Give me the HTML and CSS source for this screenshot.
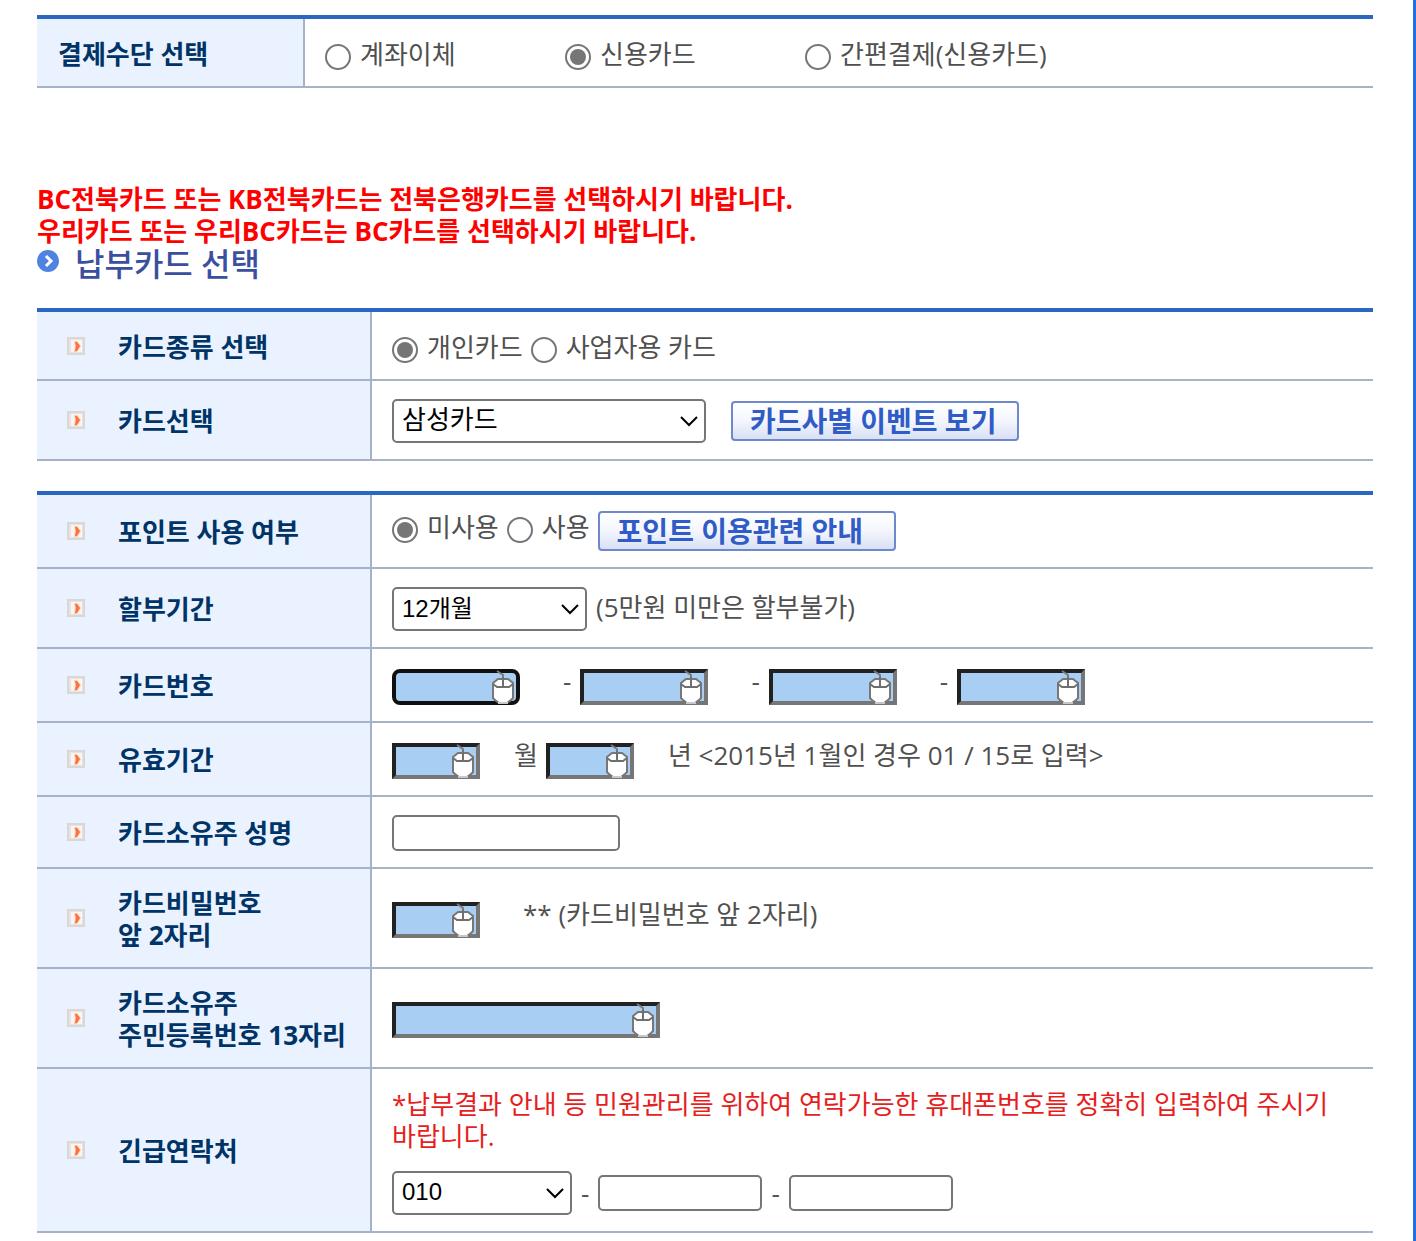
FILE: index.html
```html
<!DOCTYPE html>
<html lang="ko">
	<head>
		<meta charset="utf-8">
		<title>납부카드 선택</title>
		<meta name="viewport" content="width=device-width, initial-scale=1.0">
		<link rel="stylesheet" href="styles.css">
	</head>
	<body>
		<svg class="defs" width="0" height="0" aria-hidden="true">
			<symbol id="bullet" viewBox="0 0 18 18">
				<rect width="18" height="18" fill="#d9d8d6"/>
				<rect x="2" y="2" width="14" height="14" fill="#e6e4e2"/>
				<rect x="4" y="3" width="11" height="12" fill="#f8f5f2"/>
				<path d="M7 4h3l4 5-4 6H7l1-6z" fill="#ffc9ae"/>
				<path d="M8 5h2l3 4-3 5H8l1-5z" fill="#fb7240"/>
			</symbol>
			<symbol id="arrow" viewBox="0 0 20 12">
				<path d="M2 2l8 8 8-8" fill="none" stroke="#000" stroke-width="2"/>
			</symbol>
			<symbol id="mouse" viewBox="0 0 24 36">
				<path d="M6 2l6 4v5" fill="none" stroke="#7b7b7b" stroke-width="2"/>
				<path d="M2 14l5-4h10l5 4v15l-2 2-4 3H8l-4-3-2-2z" fill="#fff" stroke="#777" stroke-width="2"/>
				<path d="M7 34h10" stroke="#c8c8c8" stroke-width="2"/>
				<path d="M2 15l4 3h12l4-3M12 8v10" fill="none" stroke="#6f6f6f" stroke-width="2"/>
			</symbol>
		</svg>
		<form class="page">
			<table class="tbl tbl-method">
				<tr>
					<th scope="row">결제수단 선택</th>
					<td>
						<div class="line methods">
							<label class="opt"><input type="radio" name="method">계좌이체</label>
							<label class="opt"><input type="radio" name="method" checked>신용카드</label>
							<label class="opt"><input type="radio" name="method">간편결제(신용카드)</label>
						</div>
					</td>
				</tr>
			</table>

			<p class="notice">BC전북카드 또는 KB전북카드는 전북은행카드를 선택하시기 바랍니다.<br>우리카드 또는 우리BC카드는 BC카드를 선택하시기 바랍니다.</p>
			<h2 class="title">
				<svg width="22" height="22" viewBox="0 0 22 22" aria-hidden="true">
					<circle cx="11" cy="11" r="11" fill="#4f83e2"/>
					<path d="M9 6l5 5-5 5" fill="none" stroke="#fff" stroke-width="3"/>
				</svg>
				납부카드 선택
			</h2>

			<table class="tbl">
				<tr>
					<th scope="row"><div class="name"><svg class="bullet"><use href="#bullet"/></svg>카드종류 선택</div></th>
					<td>
						<div class="line">
							<label class="opt"><input type="radio" name="kind" checked>개인카드</label>
							<label class="opt"><input type="radio" name="kind">사업자용 카드</label>
						</div>
					</td>
				</tr>
				<tr class="h80">
					<th scope="row"><div class="name"><svg class="bullet"><use href="#bullet"/></svg><label for="card">카드선택</label></div></th>
					<td>
						<div class="line">
							<div class="select select-card">
								<select id="card"><option>삼성카드</option></select>
								<svg><use href="#arrow"/></svg>
							</div>
							<button type="button" class="btn btn-event">카드사별 이벤트 보기</button>
						</div>
					</td>
				</tr>
			</table>

			<table class="tbl">
				<tr class="h74">
					<th scope="row"><div class="name"><svg class="bullet"><use href="#bullet"/></svg>포인트 사용 여부</div></th>
					<td>
						<div class="line line-top">
							<label class="opt"><input type="radio" name="point" checked>미사용</label>
							<label class="opt"><input type="radio" name="point">사용</label>
							<button type="button" class="btn btn-point">포인트 이용관련 안내</button>
						</div>
					</td>
				</tr>
				<tr class="h80">
					<th scope="row"><div class="name"><svg class="bullet"><use href="#bullet"/></svg><label for="months">할부기간</label></div></th>
					<td>
						<div class="line line-base">
							<div class="select select-month">
								<select id="months"><option>12개월</option></select>
								<svg><use href="#arrow"/></svg>
							</div>
							<span class="after">(5만원 미만은 할부불가)</span>
						</div>
					</td>
				</tr>
				<tr class="h74">
					<th scope="row"><div class="name"><svg class="bullet"><use href="#bullet"/></svg><label for="no1">카드번호</label></div></th>
					<td>
						<div class="line line-top">
							<div class="secure focus"><input type="text" id="no1"><svg><use href="#mouse"/></svg></div>
							<span class="dash">-</span>
							<div class="secure"><input type="password" aria-label="카드번호 2"><svg><use href="#mouse"/></svg></div>
							<span class="dash">-</span>
							<div class="secure"><input type="password" aria-label="카드번호 3"><svg><use href="#mouse"/></svg></div>
							<span class="dash">-</span>
							<div class="secure"><input type="text" aria-label="카드번호 4"><svg><use href="#mouse"/></svg></div>
						</div>
					</td>
				</tr>
				<tr class="h74">
					<th scope="row"><div class="name"><svg class="bullet"><use href="#bullet"/></svg><label for="month">유효기간</label></div></th>
					<td>
						<div class="line line-top">
							<div class="secure short"><input type="text" id="month"><svg><use href="#mouse"/></svg></div>
							<label class="unit" for="month">월</label>
							<div class="secure short"><input type="text" id="year"><svg><use href="#mouse"/></svg></div>
							<label for="year">년 &lt;2015년 1월인 경우 01 / 15로 입력&gt;</label>
						</div>
					</td>
				</tr>
				<tr class="h72">
					<th scope="row"><div class="name"><svg class="bullet"><use href="#bullet"/></svg><label for="owner">카드소유주 성명</label></div></th>
					<td><div class="line"><input type="text" id="owner" class="text owner"></div></td>
				</tr>
				<tr class="h100">
					<th scope="row"><div class="name"><svg class="bullet"><use href="#bullet"/></svg><label for="pin">카드비밀번호<br>앞 2자리</label></div></th>
					<td>
						<div class="line line-top">
							<div class="secure short"><input type="password" id="pin"><svg><use href="#mouse"/></svg></div>
							<span class="after">** (카드비밀번호 앞 2자리)</span>
						</div>
					</td>
				</tr>
				<tr class="h100">
					<th scope="row"><div class="name"><svg class="bullet"><use href="#bullet"/></svg><label for="jumin">카드소유주<br>주민등록번호 13자리</label></div></th>
					<td>
						<div class="line line-top">
							<div class="secure long"><input type="password" id="jumin"><svg><use href="#mouse"/></svg></div>
						</div>
					</td>
				</tr>
				<tr class="h164">
					<th scope="row"><div class="name"><svg class="bullet"><use href="#bullet"/></svg><label for="tel1">긴급연락처</label></div></th>
					<td>
						<p class="warn">*납부결과 안내 등 민원관리를 위하여 연락가능한 휴대폰번호를 정확히 입력하여 주시기 바랍니다.</p>
						<div class="line">
							<div class="select select-tel">
								<select id="tel1"><option>010</option></select>
								<svg><use href="#arrow"/></svg>
							</div>
							<span class="dash">-</span>
							<input type="text" class="text tel" aria-label="전화번호 가운데 자리">
							<span class="dash">-</span>
							<input type="text" class="text tel" aria-label="전화번호 끝자리">
						</div>
					</td>
				</tr>
			</table>
		</form>
	</body>
</html>
```
FILE: styles.css
```css
* {
	box-sizing: border-box;
}
body {
	margin: 0;
	background: #fff;
	color: #505050;
	font-family: "Open Sans", "Noto Sans CJK KR", sans-serif;
	font-size: 26px;
	line-height: 32px;
	word-break: keep-all;
}
.defs {
	position: absolute;
}
.page {
	min-height: 100vh;
	padding: 15px 40px 8px 37px;
	border-right: 3px solid #1a73e0;
}

/* tables */
.tbl {
	width: 100%;
	margin-bottom: 30px;
	border-top: 4px solid #2a67c2;
	border-spacing: 0;
	table-layout: fixed;
}
.tbl:last-child {
	margin-bottom: 0;
}
.tbl th,
.tbl td {
	height: 69px;
	padding: 2px 20px 0;
	border-bottom: 2px solid #a5b2c8;
	text-align: left;
	vertical-align: middle;
}
.tbl th {
	width: 335px;
	padding: 2px 0 0 30px;
	border-right: 2px solid #a5b2c8;
	background: #eaf2ff;
	color: #036;
}
.tbl-method th {
	width: 268px;
	padding-left: 21px;
}
.tbl .h72 > * {
	height: 72px;
}
.tbl .h74 > * {
	height: 74px;
}
.tbl .h80 > * {
	height: 80px;
}
.tbl .h100 > * {
	height: 100px;
}
.tbl .h164 > * {
	height: 164px;
}
.tbl .h74 > td,
.tbl .h100 > td {
	padding-top: 0;
}
.name {
	display: flex;
	align-items: center;
	gap: 33px;
	white-space: nowrap;
}
.bullet {
	flex: none;
	width: 18px;
	height: 18px;
	margin-bottom: 2px;
}

/* texts */
.notice {
	margin: 95px 0 0;
	color: #f00;
	font-weight: bold;
}
.tbl-method {
	margin-bottom: 0;
}
.title {
	display: flex;
	gap: 16px;
	margin: 0 0 27px;
	color: #3a509f;
	font-size: 32px;
	font-weight: 500;
	line-height: 34px;
}
.title svg {
	margin-top: 3px;
}
.warn {
	margin: 0 0 19px;
	color: #e61e1e;
}

/* controls */
.line {
	display: flex;
	align-items: center;
	white-space: nowrap;
}
.line-top {
	align-items: flex-start;
	height: 40px;
}
.line-base {
	align-items: baseline;
}
.opt {
	display: flex;
	align-items: center;
	gap: 9px;
	margin-right: 8px;
}
.methods .opt {
	min-width: 240px;
	margin-right: 0;
}
input[type="radio"] {
	appearance: none;
	flex: none;
	width: 26px;
	height: 26px;
	margin: 6px 0 0;
	border: 2px solid #767676;
	border-radius: 50%;
	background: #fff;
}
input[type="radio"]:checked {
	padding: 3px;
	background: #767676 content-box;
}
.select {
	position: relative;
}
.select select {
	appearance: none;
	display: block;
	width: 100%;
	height: 44px;
	padding: 0 8px 2px;
	border: 2px solid #767676;
	border-radius: 5px;
	background: #fff;
	color: #000;
	font-family: "Liberation Sans", "Noto Sans CJK KR", sans-serif;
	font-size: 24px;
}
.select svg {
	position: absolute;
	top: 16px;
	right: 7px;
	width: 20px;
	height: 12px;
	pointer-events: none;
}
.select-card {
	width: 314px;
	margin-right: 25px;
}
.select-card select {
	font-size: 26px;
}
.select-month {
	width: 195px;
}
.select-tel {
	width: 180px;
}
.btn {
	height: 40px;
	padding: 0 0 0 17px;
	border: 2px solid #6d89cb;
	border-radius: 4px;
	background: linear-gradient(#fff, #f4f6fd 50%, #d9e0f4);
	color: #2f5cc6;
	font-family: inherit;
	font-size: 28px;
	font-weight: bold;
	line-height: 36px;
	text-align: left;
}
.btn-event {
	width: 288px;
}
.btn-point {
	width: 298px;
}
.text {
	height: 36px;
	border: 2px solid #767676;
	border-radius: 5px;
	font-size: 24px;
}
.owner {
	width: 228px;
}
.tel {
	width: 164px;
}
.dash {
	padding: 0 9px;
}
.after {
	padding-left: 9px;
}
.unit {
	margin-right: 8px;
}

/* fields typed with the mouse keypad */
.secure {
	position: relative;
	width: 128px;
	margin: 4px 34px 0 0;
}
.secure input {
	display: block;
	width: 100%;
	height: 36px;
	border: 4px solid;
	border-color: #212121 #767676 #767676 #212121;
	border-radius: 0;
	background: #a9cef4;
}
.secure svg {
	position: absolute;
	top: 0;
	right: 5px;
	width: 24px;
	height: 36px;
	pointer-events: none;
}
.focus input {
	border-color: #101010;
	border-radius: 8px;
}
.short {
	width: 88px;
}
.long {
	width: 268px;
}
```
